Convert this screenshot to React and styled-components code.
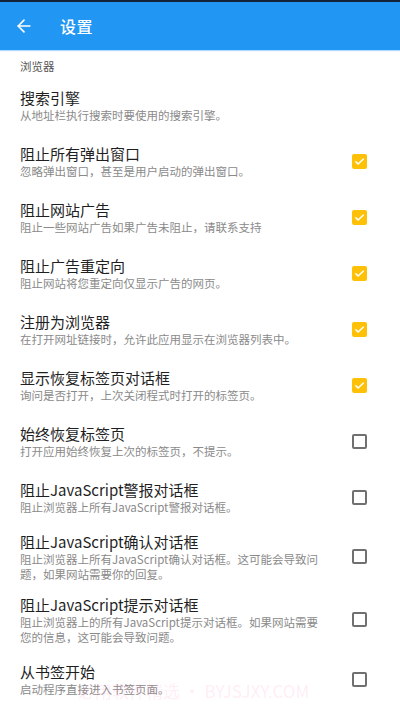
import React from "react"
import styled, { createGlobalStyle } from "styled-components"
import { ArrowLeft } from "lucide-react"

const GlobalStyle = createGlobalStyle`
  html, body {
    margin: 0;
    padding: 0;
    background: #ffffff;
    font-family: "Noto Sans CJK SC", "Noto Sans", Roboto, sans-serif;
  }
  * {
    box-sizing: border-box;
  }
`

const Page = styled.div`
  position: relative;
  width: 400px;
  height: 710px;
  overflow: hidden;
  background: #ffffff;
`

const StatusStrip = styled.div`
  height: 2px;
  background: #13233a;
`

const Toolbar = styled.div`
  display: flex;
  align-items: center;
  height: 48px;
  padding-left: 14px;
  background: #2196f3;
  box-shadow: 0 1px 1px rgba(33, 150, 243, 0.35);
  color: #ffffff;
`

const BackButton = styled.div`
  display: flex;
  align-items: center;
  justify-content: center;
  width: 20px;
  height: 20px;
  margin-right: 26px;
`

const ToolbarTitle = styled.div`
  font-size: 16px;
  font-weight: 500;
  letter-spacing: 0.5px;
`

const SectionHeader = styled.div`
  padding: 8px 20px 3px;
  font-size: 11.5px;
  line-height: 16px;
  color: #555555;
`

const Row = styled.div`
  display: flex;
  align-items: center;
  min-height: 56px;
  padding: 6px 33px 6px 20px;
`

const TextBlock = styled.div`
  flex: 1;
  max-width: 304px;
`

const Title = styled.div`
  font-size: 15px;
  line-height: 21px;
  color: #1f1f1f;
`

const Summary = styled.div`
  font-size: 11.5px;
  line-height: 15px;
  color: #8a8a8a;
`

const CheckBox = styled.div`
  display: flex;
  align-items: center;
  justify-content: center;
  flex-shrink: 0;
  width: 15px;
  height: 15px;
  margin-left: auto;
  border-radius: 2px;
  background: ${(p) => (p.checked ? "#ffc107" : "transparent")};
  border: ${(p) => (p.checked ? "none" : "2px solid #707070")};
`

const Watermark = styled.div`
  position: absolute;
  left: 78px;
  top: 678px;
  font-size: 17px;
  color: rgba(255, 150, 200, 0.18);
  white-space: nowrap;
  pointer-events: none;
`

const items = [
  { title: "搜索引擎", summary: "从地址栏执行搜索时要使用的搜索引擎。" },
  { title: "阻止所有弹出窗口", summary: "忽略弹出窗口，甚至是用户启动的弹出窗口。", checked: true },
  { title: "阻止网站广告", summary: "阻止一些网站广告如果广告未阻止，请联系支持", checked: true },
  { title: "阻止广告重定向", summary: "阻止网站将您重定向仅显示广告的网页。", checked: true },
  { title: "注册为浏览器", summary: "在打开网址链接时，允许此应用显示在浏览器列表中。", checked: true },
  { title: "显示恢复标签页对话框", summary: "询问是否打开，上次关闭程式时打开的标签页。", checked: true },
  { title: "始终恢复标签页", summary: "打开应用始终恢复上次的标签页，不提示。", checked: false },
  { title: "阻止JavaScript警报对话框", summary: "阻止浏览器上所有JavaScript警报对话框。", checked: false },
  {
    title: "阻止JavaScript确认对话框",
    summary: "阻止浏览器上所有JavaScript确认对话框。这可能会导致问题，如果网站需要你的回复。",
    checked: false,
  },
  {
    title: "阻止JavaScript提示对话框",
    summary: "阻止浏览器上的所有JavaScript提示对话框。如果网站需要您的信息，这可能会导致问题。",
    checked: false,
  },
  { title: "从书签开始", summary: "启动程序直接进入书签页面。", checked: false },
]

const Check = () => (
  <svg width="11" height="11" viewBox="0 0 24 24" fill="none" stroke="#ffffff" strokeWidth="3.5" strokeLinecap="round" strokeLinejoin="round">
    <path d="M4 12.5l5 5L20 7" />
  </svg>
)

const App = () => {
  return (
    <Page>
      <GlobalStyle />
      <StatusStrip />
      <Toolbar>
        <BackButton>
          <ArrowLeft size={20} strokeWidth={2} color="#ffffff" />
        </BackButton>
        <ToolbarTitle>设置</ToolbarTitle>
      </Toolbar>
      <SectionHeader>浏览器</SectionHeader>
      {items.map((item) => (
        <Row key={item.title}>
          <TextBlock>
            <Title>{item.title}</Title>
            <Summary>{item.summary}</Summary>
          </TextBlock>
          {item.checked !== undefined && (
            <CheckBox checked={item.checked}>{item.checked && <Check />}</CheckBox>
          )}
        </Row>
      ))}
      <Watermark>必用软件精选 • BYJSJXY.COM</Watermark>
    </Page>
  )
}

export default App
